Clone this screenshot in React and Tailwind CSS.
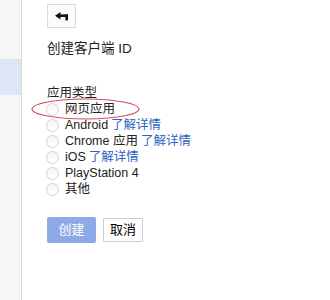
const APP_TYPES = [
  { label: '网页应用' },
  { label: 'Android', link: '了解详情' },
  { label: 'Chrome 应用', link: '了解详情' },
  { label: 'iOS', link: '了解详情' },
  { label: 'PlayStation 4' },
  { label: '其他' },
]

function BackArrow() {
  return (
    <svg width="14" height="9" viewBox="0 0 14 9">
      <path d="M0 3.7 L5.5 0 L5.5 7.4 Z" fill="#111" />
      <rect x="4" y="2.4" width="9" height="2.6" fill="#111" />
      <rect x="10.4" y="2.4" width="2.6" height="6" fill="#111" />
    </svg>
  )
}

function Radio() {
  return (
    <span className="ml-[-1px] h-[13px] w-[13px] shrink-0 rounded-full border border-[#d3d3d3] bg-gradient-to-b from-[#f4f4f4] to-white" />
  )
}

export default function App() {
  return (
    <div className="relative flex h-[300px] w-[330px] bg-white font-['Liberation_Sans','Noto_Sans_CJK_SC',sans-serif] text-[#222]">
      <aside className="w-[22px] shrink-0 border-r border-[#dadada] bg-[#f6f6f6] pt-[59px]">
        <div className="h-[36px] bg-[#dde6f6]" />
      </aside>

      <main className="pl-[25px] pt-[4px]">
        <button className="flex h-[24px] w-[29px] items-center justify-center border border-[#d9d9d9] bg-[#fbfbfb]">
          <BackArrow />
        </button>

        <h1 className="mt-[11px] text-[13.5px] leading-[20px]">创建客户端 ID</h1>

        <div className="mt-[26px] text-[12.5px] leading-[16px]">应用类型</div>
        <ul className="text-[12.5px] leading-[16px]">
          {APP_TYPES.map((t) => (
            <li key={t.label} className="flex h-[16px] items-center gap-[6px]">
              <Radio />
              <span>
                {t.label}
                {t.link && <span className="ml-[3px] text-[#2d62c0]">{t.link}</span>}
              </span>
            </li>
          ))}
        </ul>

        <div className="mt-[20px] flex items-start gap-[7px] text-[13px]">
          <button className="h-[26px] w-[49px] rounded-[2px] bg-[#8eaae6] text-white">创建</button>
          <button className="mt-[1px] h-[24px] w-[40px] rounded-[1px] border border-[#cccccc] bg-white text-black">
            取消
          </button>
        </div>
      </main>

      <svg className="pointer-events-none absolute left-[31px] top-[98px]" width="109" height="22" viewBox="0 0 109 22">
        <ellipse cx="54.5" cy="11" rx="53.5" ry="10" fill="none" stroke="#d2505c" strokeWidth="1.1" />
      </svg>
    </div>
  )
}
